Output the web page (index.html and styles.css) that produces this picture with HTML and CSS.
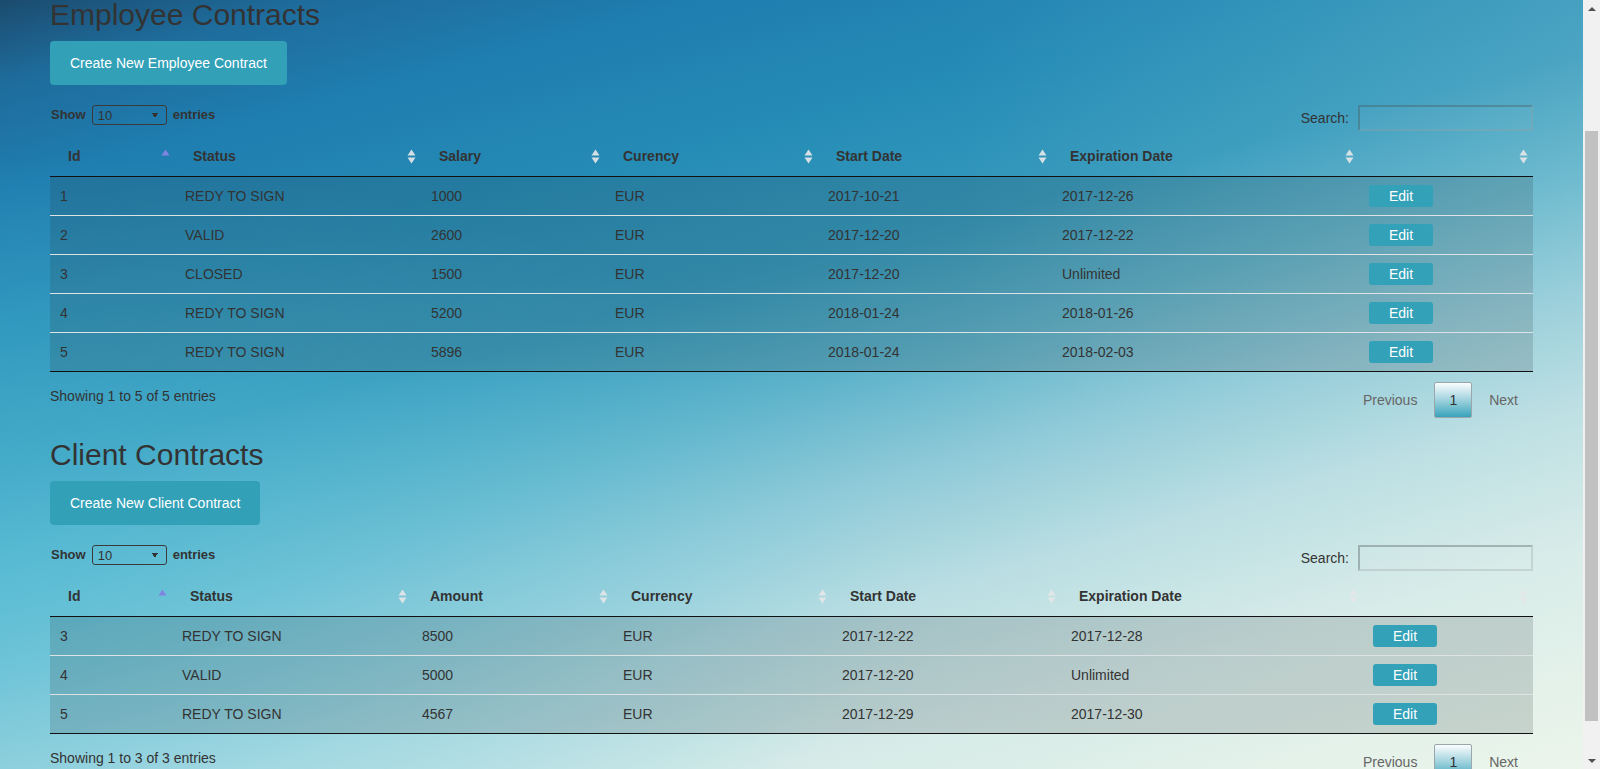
FILE: index.html
```html
<!DOCTYPE html>
<html lang="en">
<head>
<meta charset="utf-8">
<title>Contracts</title>
<link rel="stylesheet" href="styles.css">
</head>
<body>
<div class="page">
  <main class="container">
    <section class="contracts">
      <h1 class="title">Employee Contracts</h1>
      <button class="btn-create" type="button">Create New Employee Contract</button>
      <div class="dt-controls">
        <label class="dt-length">Show <select class="dt-select"><option>10</option><option>25</option><option>50</option><option>100</option></select> entries</label>
        <label class="dt-search">Search:<input type="search" class="dt-input"></label>
      </div>
      <table class="dt-table">
        <colgroup>
          <col class="w125"><col class="w246"><col class="w184"><col class="w213"><col class="w234"><col class="w307"><col class="w174">
        </colgroup>
        <thead>
          <tr>
            <th>Id<svg class="sort" viewBox="0 0 9 15" width="9" height="15"><polygon class="asc" points="0.5,6.5 4.5,0.5 8.5,6.5"/></svg></th>
            <th>Status<svg class="sort" viewBox="0 0 9 15" width="9" height="15"><polygon points="0.5,6.5 4.5,0.5 8.5,6.5"/><polygon points="0.5,8.5 8.5,8.5 4.5,14.5"/></svg></th>
            <th>Salary<svg class="sort" viewBox="0 0 9 15" width="9" height="15"><polygon points="0.5,6.5 4.5,0.5 8.5,6.5"/><polygon points="0.5,8.5 8.5,8.5 4.5,14.5"/></svg></th>
            <th>Curency<svg class="sort" viewBox="0 0 9 15" width="9" height="15"><polygon points="0.5,6.5 4.5,0.5 8.5,6.5"/><polygon points="0.5,8.5 8.5,8.5 4.5,14.5"/></svg></th>
            <th>Start Date<svg class="sort" viewBox="0 0 9 15" width="9" height="15"><polygon points="0.5,6.5 4.5,0.5 8.5,6.5"/><polygon points="0.5,8.5 8.5,8.5 4.5,14.5"/></svg></th>
            <th>Expiration Date<svg class="sort" viewBox="0 0 9 15" width="9" height="15"><polygon points="0.5,6.5 4.5,0.5 8.5,6.5"/><polygon points="0.5,8.5 8.5,8.5 4.5,14.5"/></svg></th>
            <th><svg class="sort" viewBox="0 0 9 15" width="9" height="15"><polygon points="0.5,6.5 4.5,0.5 8.5,6.5"/><polygon points="0.5,8.5 8.5,8.5 4.5,14.5"/></svg></th>
          </tr>
        </thead>
        <tbody>
          <tr><td>1</td><td>REDY TO SIGN</td><td>1000</td><td>EUR</td><td>2017-10-21</td><td>2017-12-26</td><td><a class="btn-edit">Edit</a></td></tr>
          <tr><td>2</td><td>VALID</td><td>2600</td><td>EUR</td><td>2017-12-20</td><td>2017-12-22</td><td><a class="btn-edit">Edit</a></td></tr>
          <tr><td>3</td><td>CLOSED</td><td>1500</td><td>EUR</td><td>2017-12-20</td><td>Unlimited</td><td><a class="btn-edit">Edit</a></td></tr>
          <tr><td>4</td><td>REDY TO SIGN</td><td>5200</td><td>EUR</td><td>2018-01-24</td><td>2018-01-26</td><td><a class="btn-edit">Edit</a></td></tr>
          <tr><td>5</td><td>REDY TO SIGN</td><td>5896</td><td>EUR</td><td>2018-01-24</td><td>2018-02-03</td><td><a class="btn-edit">Edit</a></td></tr>
        </tbody>
      </table>
      <div class="dt-footer">
        <div class="dt-info">Showing 1 to 5 of 5 entries</div>
        <div class="dt-paginate"><a class="pg">Previous</a><a class="pg current">1</a><a class="pg">Next</a></div>
      </div>
    </section>

    <section class="contracts second">
      <h1 class="title">Client Contracts</h1>
      <button class="btn-create" type="button">Create New Client Contract</button>
      <div class="dt-controls">
        <label class="dt-length">Show <select class="dt-select"><option>10</option><option>25</option><option>50</option><option>100</option></select> entries</label>
        <label class="dt-search">Search:<input type="search" class="dt-input"></label>
      </div>
      <table class="dt-table">
        <colgroup>
          <col class="w122"><col class="w240"><col class="w201"><col class="w219"><col class="w229"><col class="w302"><col class="w170">
        </colgroup>
        <thead>
          <tr>
            <th>Id<svg class="sort" viewBox="0 0 9 15" width="9" height="15"><polygon class="asc" points="0.5,6.5 4.5,0.5 8.5,6.5"/></svg></th>
            <th>Status<svg class="sort" viewBox="0 0 9 15" width="9" height="15"><polygon points="0.5,6.5 4.5,0.5 8.5,6.5"/><polygon points="0.5,8.5 8.5,8.5 4.5,14.5"/></svg></th>
            <th>Amount<svg class="sort" viewBox="0 0 9 15" width="9" height="15"><polygon points="0.5,6.5 4.5,0.5 8.5,6.5"/><polygon points="0.5,8.5 8.5,8.5 4.5,14.5"/></svg></th>
            <th>Currency<svg class="sort" viewBox="0 0 9 15" width="9" height="15"><polygon points="0.5,6.5 4.5,0.5 8.5,6.5"/><polygon points="0.5,8.5 8.5,8.5 4.5,14.5"/></svg></th>
            <th>Start Date<svg class="sort" viewBox="0 0 9 15" width="9" height="15"><polygon points="0.5,6.5 4.5,0.5 8.5,6.5"/><polygon points="0.5,8.5 8.5,8.5 4.5,14.5"/></svg></th>
            <th>Expiration Date<svg class="sort" viewBox="0 0 9 15" width="9" height="15"><polygon points="0.5,6.5 4.5,0.5 8.5,6.5"/><polygon points="0.5,8.5 8.5,8.5 4.5,14.5"/></svg></th>
            <th><svg class="sort" viewBox="0 0 9 15" width="9" height="15"><polygon points="0.5,6.5 4.5,0.5 8.5,6.5"/><polygon points="0.5,8.5 8.5,8.5 4.5,14.5"/></svg></th>
          </tr>
        </thead>
        <tbody>
          <tr><td>3</td><td>REDY TO SIGN</td><td>8500</td><td>EUR</td><td>2017-12-22</td><td>2017-12-28</td><td><a class="btn-edit">Edit</a></td></tr>
          <tr><td>4</td><td>VALID</td><td>5000</td><td>EUR</td><td>2017-12-20</td><td>Unlimited</td><td><a class="btn-edit">Edit</a></td></tr>
          <tr><td>5</td><td>REDY TO SIGN</td><td>4567</td><td>EUR</td><td>2017-12-29</td><td>2017-12-30</td><td><a class="btn-edit">Edit</a></td></tr>
        </tbody>
      </table>
      <div class="dt-footer">
        <div class="dt-info">Showing 1 to 3 of 3 entries</div>
        <div class="dt-paginate"><a class="pg">Previous</a><a class="pg current">1</a><a class="pg">Next</a></div>
      </div>
    </section>
  </main>
</div>
<div class="scrollbar" aria-hidden="true">
  <div class="sb-btn sb-up"></div>
  <div class="sb-track"><div class="sb-thumb"></div></div>
  <div class="sb-btn sb-down"></div>
</div>
</body>
</html>
```

FILE: styles.css
```css
* { box-sizing: border-box; }

html, body {
  margin: 0;
  height: 100%;
}

body {
  display: flex;
  overflow: hidden;
  font-family: "Liberation Sans", Arial, Helvetica, sans-serif;
  font-size: 14px;
  line-height: 20px;
  color: #333;
}

.page {
  flex: 1;
  min-width: 0;
  height: 100vh;
  overflow: hidden;
  background:
    radial-gradient(900px 420px at 0% 75%, rgba(95, 200, 222, 0.55), rgba(95, 200, 222, 0) 100%),
    linear-gradient(to right, rgba(240, 248, 240, 0) 60%, rgba(240, 248, 240, 0.12) 100%),
    linear-gradient(165deg,
      #1b4b6e 0%,
      #1e6c9c 7%,
      #1f7eb0 16%,
      #258cb6 28%,
      #3499bc 40%,
      #5cb2ca 50%,
      #8fcad8 60%,
      #b8dde2 70%,
      #d6ebe8 82%,
      #ebf5ea 100%);
}

.container {
  padding: 0 50px;
}

.contracts.second {
  margin-top: 22px;
}

.title {
  margin: 0;
  font-size: 30px;
  line-height: 30px;
  font-weight: 400;
  color: #333;
}

.btn-create {
  display: block;
  margin-top: 11px;
  padding: 12px 20px;
  border: 0;
  border-radius: 4px;
  background: #32a0b7;
  color: #fff;
  font-family: inherit;
  font-size: 14px;
  line-height: 20px;
}

.dt-controls {
  margin-top: 20px;
  display: flex;
  justify-content: space-between;
  align-items: flex-start;
}

.dt-length {
  display: flex;
  align-items: center;
  gap: 6px;
  height: 20px;
  padding-left: 1px;
  font-size: 13px;
  font-weight: bold;
}

.dt-select {
  appearance: none;
  -webkit-appearance: none;
  width: 75px;
  height: 20px;
  margin: 0;
  padding: 0 0 0 5px;
  border: 1px solid #3a3a3a;
  border-radius: 3px;
  font-family: inherit;
  font-size: 13px;
  font-weight: normal;
  color: #333;
  background-color: transparent;
  background-image:
    linear-gradient(to top right, transparent 50%, #333 50%),
    linear-gradient(to bottom right, #333 50%, transparent 50%);
  background-size: 3px 5px, 3px 5px;
  background-position: right 11px center, right 8px center;
  background-repeat: no-repeat;
}

.dt-search {
  display: flex;
  align-items: center;
  gap: 9px;
  font-weight: normal;
}

.dt-input {
  width: 175px;
  height: 26px;
  margin: 0;
  padding: 0 4px;
  border: 2px solid;
  border-color: rgba(70, 80, 80, 0.35) rgba(150, 160, 160, 0.3) rgba(150, 160, 160, 0.3) rgba(70, 80, 80, 0.35);
  background: rgba(255, 255, 255, 0.03);
  font-family: inherit;
  font-size: 14px;
}

.dt-table {
  width: 100%;
  margin-top: 5px;
  table-layout: fixed;
  border-collapse: separate;
  border-spacing: 0;
  border-bottom: 1px solid #111;
}

.w122 { width: 122px; } .w125 { width: 125px; } .w170 { width: 170px; }
.w174 { width: 174px; } .w184 { width: 184px; } .w201 { width: 201px; }
.w213 { width: 213px; } .w219 { width: 219px; } .w229 { width: 229px; }
.w234 { width: 234px; } .w240 { width: 240px; } .w246 { width: 246px; }
.w302 { width: 302px; } .w307 { width: 307px; }

.dt-table th {
  position: relative;
  padding: 10px 18px;
  text-align: left;
  font-weight: bold;
  border-bottom: 1px solid #111;
  white-space: nowrap;
}

.sort {
  position: absolute;
  right: 5px;
  top: 50%;
  margin-top: -7px;
  fill: rgba(228, 230, 232, 0.92);
}

.sort .asc {
  fill: #8284e2;
}

.dt-table tbody tr {
  background: rgba(40, 55, 60, 0.17);
}

.dt-table td {
  padding: 8px 10px;
  vertical-align: middle;
  white-space: nowrap;
}

.dt-table tbody tr + tr td {
  border-top: 1px solid #dde3e4;
}

.btn-edit {
  display: block;
  width: 64px;
  padding: 1px 0;
  border-radius: 3px;
  background: #33a1b8;
  color: #fff;
  text-align: center;
  line-height: 20px;
}

.dt-footer {
  display: flex;
  justify-content: space-between;
  align-items: flex-start;
  margin-top: 10px;
}

.dt-info {
  padding-top: 4px;
}

.dt-paginate {
  display: flex;
  gap: 2px;
}

.pg {
  display: block;
  padding: 7px 14px;
  border: 1px solid transparent;
  border-radius: 2px;
  color: #666;
  line-height: 20px;
}

.pg.current {
  color: #333;
  border-color: #9aa6aa;
  background: linear-gradient(to bottom, #fbfdfe 0%, #9fd2dd 50%, #38a3bb 100%);
}

.scrollbar {
  flex: none;
  width: 17px;
  height: 100vh;
  display: flex;
  flex-direction: column;
  background: #f1f1f1;
}

.sb-btn {
  height: 17px;
  flex: none;
  display: flex;
  align-items: center;
  justify-content: center;
}

.sb-up::before,
.sb-down::before {
  content: "";
  border-left: 4px solid transparent;
  border-right: 4px solid transparent;
}

.sb-up::before { border-bottom: 4px solid #505050; }
.sb-down::before { border-top: 4px solid #505050; }

.sb-track {
  flex: 1;
  padding: 0 2px;
}

.sb-thumb {
  margin-top: 114px;
  height: 590px;
  background: #c1c1c1;
}
```
